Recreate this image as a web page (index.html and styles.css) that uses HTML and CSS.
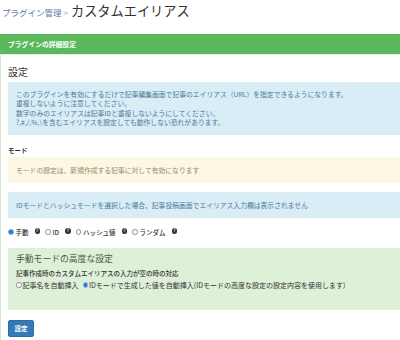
FILE: index.html
```html
<!DOCTYPE html>
<html lang="ja">
<head>
<meta charset="utf-8">
<title>カスタムエイリアス</title>
<link rel="stylesheet" href="styles.css">
</head>
<body>
<h1 class="page-title"><a class="crumb" href="#">プラグイン管理</a><span class="sep">&gt;</span><span class="title-text">カスタムエイリアス</span></h1>
<div class="panel">
  <div class="panel-heading">プラグインの詳細設定</div>
  <div class="panel-body">
    <h2 class="section-title">設定</h2>
    <div class="alert alert-info multi">
      このプラグインを有効にするだけで記事編集画面で記事のエイリアス（URL）を指定できるようになります。<br>
      重複しないように注意してください。<br>
      数字のみのエイリアスは記事IDと重複しないようにしてください。<br>
      ?,#,/,%,\を含むエイリアスを設定しても動作しない恐れがあります。
    </div>
    <div class="field-label">モード</div>
    <div class="alert alert-warning single">モードの設定は、新規作成する記事に対して有効になります</div>
    <div class="alert alert-info single">IDモードとハッシュモードを選択した場合、記事投稿画面でエイリアス入力欄は表示されません</div>
    <div class="mode-radios">
      <label class="radio"><input type="radio" name="mode" checked><span>手動</span></label><span class="help">?</span>
      <label class="radio"><input type="radio" name="mode"><span>ID</span></label><span class="help">?</span>
      <label class="radio"><input type="radio" name="mode"><span>ハッシュ値</span></label><span class="help">?</span>
      <label class="radio"><input type="radio" name="mode"><span>ランダム</span></label><span class="help">?</span>
    </div>
    <div class="alert alert-success advanced">
      <div class="adv-title">手動モードの高度な設定</div>
      <div class="adv-sub">記事作成時のカスタムエイリアスの入力が空の時の対応</div>
      <div class="adv-radios">
        <label class="radio"><input type="radio" name="empty"><span>記事名を自動挿入</span></label>
        <label class="radio"><input type="radio" name="empty" checked><span>IDモードで生成した値を自動挿入(IDモードの高度な設定の設定内容を使用します)</span></label>
      </div>
    </div>
    <button class="btn" type="button">設定</button>
  </div>
</div>
</body>
</html>
```
FILE: styles.css
```css
* { box-sizing: border-box; }
html, body { margin: 0; padding: 0; background: #fff; }
body {
  font-family: "Noto Sans CJK JP", "Noto Sans", sans-serif;
  color: #333;
  overflow: hidden;
}
.page-title {
  margin: 0;
  height: 34px;
  padding: 0 0 0 2px;
  display: flex;
  align-items: baseline;
  font-weight: normal;
  line-height: 22px;
}
.crumb {
  font-size: 8.5px;
  color: #6478ab;
  text-decoration: none;
}
.sep {
  font-size: 8px;
  color: #999;
  margin: 0 3px 0 2px;
}
.title-text {
  font-size: 13.2px;
  color: #333;
}
.panel {
  border-left: 1px solid #d6e9c6;
}
.panel-heading {
  height: 21px;
  margin-left: -1px;
  background: #5cb85c;
  color: #fff;
  font-size: 6.8px;
  font-weight: bold;
  line-height: 20px;
  padding-left: 8px;
  border-bottom: 1px solid #e4eedc;
}
.panel-body {
  padding: 6px 0 4px 7px;
}
.section-title {
  margin: 5px 0 4px;
  font-size: 10px;
  line-height: 12px;
  font-weight: normal;
  color: #333;
}
.alert {
  padding: 0 8px;
  font-size: 6.8px;
}
.alert-info { background: #d9edf7; color: #4b7a97; }
.alert-warning { background: #fcf8e3; color: #9a8a66; }
.alert-success { background: #dff0d8; color: #465a44; }
.multi {
  padding-top: 7.5px;
  padding-bottom: 7.5px;
  line-height: 9.5px;
}
.single {
  padding-top: 8.5px;
  padding-bottom: 8.5px;
  line-height: 9px;
}
.field-label {
  margin-top: 10px;
  margin-bottom: 2px;
  font-size: 6.5px;
  line-height: 10px;
  font-weight: bold;
  color: #333;
}
.alert-warning.single { margin-bottom: 9px; }
.mode-radios {
  margin-top: 9px;
  margin-bottom: 11px;
  height: 10px;
  display: flex;
  align-items: center;
  font-size: 6.5px;
  font-weight: 500;
  color: #333;
}
.radio {
  display: inline-flex;
  align-items: center;
  gap: 2px;
}
.radio input {
  appearance: none;
  -webkit-appearance: none;
  margin: 0;
  width: 5.5px;
  height: 5.5px;
  border: 0.7px solid #8a8a8a;
  border-radius: 50%;
  background: #fff;
}
.radio input:checked {
  background: #2a7ae2;
  border-color: #7fb0ea;
}
.help {
  display: inline-block;
  width: 5.5px;
  height: 5.5px;
  border-radius: 50%;
  background: #333;
  color: #fff;
  font-size: 4.5px;
  line-height: 5.5px;
  text-align: center;
  font-weight: bold;
  margin: -2px 5px 0 6px;
}
.advanced {
  padding-top: 5px;
  padding-bottom: 20px;
}
.adv-title {
  font-size: 8.8px;
  line-height: 12px;
}
.adv-sub {
  margin-top: 3.5px;
  font-size: 6.5px;
  line-height: 9px;
  font-weight: 500;
  color: #333;
}
.adv-radios {
  margin-top: 3px;
  display: flex;
  align-items: center;
  gap: 4px;
  font-size: 7px;
  line-height: 9px;
  color: #333;
}
.adv-radios .radio { gap: 1px; }
.btn {
  margin-top: 10px;
  display: block;
  width: 26px;
  height: 17px;
  padding: 0;
  background: #337ab7;
  border: 1px solid #2e6da4;
  border-radius: 2px;
  color: #fff;
  font-family: "Noto Sans CJK JP", sans-serif;
  font-size: 6.5px;
  font-weight: bold;
}
```
